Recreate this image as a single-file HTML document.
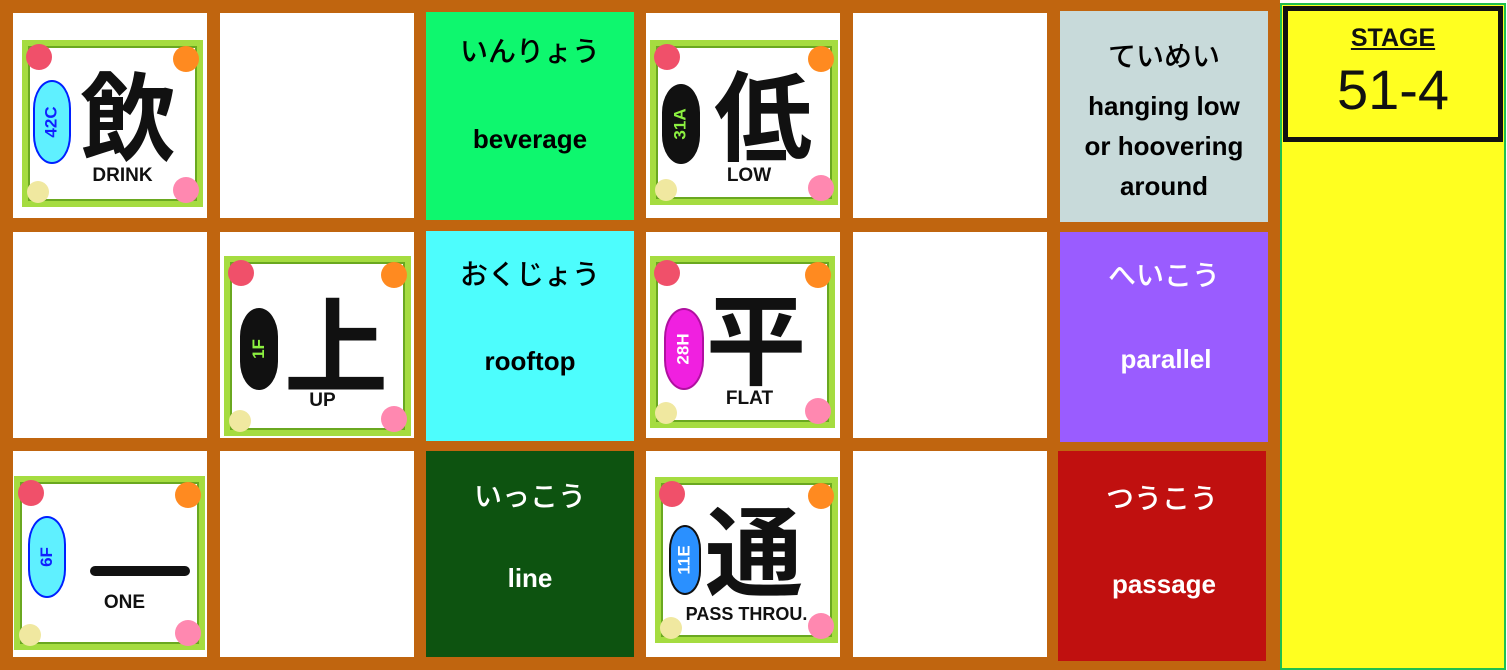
<!DOCTYPE html>
<html><head><meta charset="utf-8"><style>
*{margin:0;padding:0;box-sizing:border-box}
body{width:1507px;height:670px;background:#fff;position:relative;overflow:hidden;font-family:"Liberation Sans","Noto Sans CJK JP",sans-serif}
#bg{position:absolute;left:0;top:0;width:1280px;height:670px;background:#c0650f}
.c{position:absolute;background:#fff}
.jp{position:absolute;left:0;right:0;text-align:center;font-size:28px;font-family:"Noto Sans CJK JP",sans-serif;font-weight:500}
.en{position:absolute;left:0;right:0;text-align:center;font-size:26px;font-weight:bold}
.card{position:absolute;border:8px solid #a5dc40;outline:2px solid #6aa820;outline-offset:-8px;background:#fff}
.card .f{position:absolute;width:26px;height:26px;border-radius:50%}
.card .k{position:absolute;font-family:"Noto Sans CJK JP",sans-serif;font-weight:700;color:#111;line-height:1}
.card .cap{position:absolute;left:0;right:0;text-align:center;font-weight:bold;font-size:19px;color:#111}
.cloud{position:absolute;border-radius:20px/30px;border:2px solid #0020ff;display:flex;align-items:center;justify-content:center}
.cloud span{transform:rotate(-90deg);font-weight:bold;font-size:17px;white-space:nowrap}
</style></head><body>
<div id="bg"></div>
<!-- row 1 -->
<div class="c" style="left:13px;top:13px;width:194px;height:205px"></div>
<div class="c" style="left:220px;top:13px;width:194px;height:205px"></div>
<div class="c" style="left:426px;top:12px;width:208px;height:208px;background:#0ef76e">
 <div class="jp" style="top:18px">いんりょう</div><div class="en" style="top:112px">beverage</div></div>
<div class="c" style="left:646px;top:13px;width:194px;height:205px"></div>
<div class="c" style="left:853px;top:13px;width:194px;height:205px"></div>
<div class="c" style="left:1060px;top:11px;width:208px;height:211px;background:#c8dada">
 <div class="jp" style="top:24px">ていめい</div>
 <div class="en" style="top:75px;line-height:40px;font-size:26px">hanging low<br>or hoovering<br>around</div></div>
<!-- row 2 -->
<div class="c" style="left:13px;top:232px;width:194px;height:206px"></div>
<div class="c" style="left:220px;top:232px;width:194px;height:206px"></div>
<div class="c" style="left:426px;top:231px;width:208px;height:210px;background:#4dfdfd">
 <div class="jp" style="top:22px">おくじょう</div><div class="en" style="top:115px">rooftop</div></div>
<div class="c" style="left:646px;top:232px;width:194px;height:206px"></div>
<div class="c" style="left:853px;top:232px;width:194px;height:206px"></div>
<div class="c" style="left:1060px;top:232px;width:208px;height:210px;background:#9a5cff;color:#fff">
 <div class="jp" style="top:22px">へいこう</div><div class="en" style="top:112px;left:4px">parallel</div></div>
<!-- row 3 -->
<div class="c" style="left:13px;top:451px;width:194px;height:206px"></div>
<div class="c" style="left:220px;top:451px;width:194px;height:206px"></div>
<div class="c" style="left:426px;top:451px;width:208px;height:206px;background:#0d5310;color:#fff">
 <div class="jp" style="top:24px">いっこう</div><div class="en" style="top:112px">line</div></div>
<div class="c" style="left:646px;top:451px;width:194px;height:206px"></div>
<div class="c" style="left:853px;top:451px;width:194px;height:206px"></div>
<div class="c" style="left:1058px;top:451px;width:208px;height:210px;background:#c0100f;color:#fff">
 <div class="jp" style="top:26px">つうこう</div><div class="en" style="top:118px;left:4px">passage</div></div>

<!-- cards -->
<div class="card" style="left:22px;top:40px;width:181px;height:167px">
 <div class="f" style="left:-4px;top:-4px;background:#f0506a"></div><div class="f" style="right:-4px;top:-2px;background:#ff8a20"></div>
 <div class="f" style="left:-3px;bottom:-4px;background:#f0e8a0;width:22px;height:22px"></div><div class="f" style="right:-4px;bottom:-4px;background:#ff88b0"></div>
 <div class="cloud" style="left:3px;top:32px;width:38px;height:84px;background:#5ff0ff;color:#1020ff"><span>42C</span></div>
 <div class="k" style="left:50px;top:16px;font-size:96px">飲</div>
 <div class="cap" style="top:117px;left:20px">DRINK</div></div>

<div class="card" style="left:650px;top:40px;width:188px;height:165px">
 <div class="f" style="left:-4px;top:-4px;background:#f0506a"></div><div class="f" style="right:-4px;top:-2px;background:#ff8a20"></div>
 <div class="f" style="left:-3px;bottom:-4px;background:#f0e8a0;width:22px;height:22px"></div><div class="f" style="right:-4px;bottom:-4px;background:#ff88b0"></div>
 <div class="cloud" style="left:4px;top:36px;width:38px;height:80px;background:#111;border-color:#111;color:#8cf040"><span>31A</span></div>
 <div class="k" style="left:56px;top:14px;font-size:98px">低</div>
 <div class="cap" style="top:117px;left:10px">LOW</div></div>

<div class="card" style="left:224px;top:256px;width:187px;height:180px">
 <div class="f" style="left:-4px;top:-4px;background:#f0506a"></div><div class="f" style="right:-4px;top:-2px;background:#ff8a20"></div>
 <div class="f" style="left:-3px;bottom:-4px;background:#f0e8a0;width:22px;height:22px"></div><div class="f" style="right:-4px;bottom:-4px;background:#ff88b0"></div>
 <div class="cloud" style="left:8px;top:44px;width:38px;height:82px;background:#111;border-color:#111;color:#8cf040"><span>1F</span></div>
 <div class="k" style="left:52px;top:24px;font-size:104px">上</div>
 <div class="cap" style="top:126px;left:10px">UP</div></div>

<div class="card" style="left:650px;top:256px;width:185px;height:172px">
 <div class="f" style="left:-4px;top:-4px;background:#f0506a"></div><div class="f" style="right:-4px;top:-2px;background:#ff8a20"></div>
 <div class="f" style="left:-3px;bottom:-4px;background:#f0e8a0;width:22px;height:22px"></div><div class="f" style="right:-4px;bottom:-4px;background:#ff88b0"></div>
 <div class="cloud" style="left:6px;top:44px;width:40px;height:82px;background:#f020e0;border-color:#b010a0;color:#fff"><span>28H</span></div>
 <div class="k" style="left:48px;top:20px;font-size:100px">平</div>
 <div class="cap" style="top:124px;left:14px">FLAT</div></div>

<div class="card" style="left:14px;top:476px;width:191px;height:174px">
 <div class="f" style="left:-4px;top:-4px;background:#f0506a"></div><div class="f" style="right:-4px;top:-2px;background:#ff8a20"></div>
 <div class="f" style="left:-3px;bottom:-4px;background:#f0e8a0;width:22px;height:22px"></div><div class="f" style="right:-4px;bottom:-4px;background:#ff88b0"></div>
 <div class="cloud" style="left:6px;top:32px;width:38px;height:82px;background:#5ff0ff;color:#1020ff"><span>6F</span></div>
 <div style="position:absolute;left:68px;top:82px;width:100px;height:10px;background:#111;border-radius:5px"></div>
 <div class="cap" style="top:108px;left:30px">ONE</div></div>

<div class="card" style="left:655px;top:477px;width:183px;height:166px">
 <div class="f" style="left:-4px;top:-4px;background:#f0506a"></div><div class="f" style="right:-4px;top:-2px;background:#ff8a20"></div>
 <div class="f" style="left:-3px;bottom:-4px;background:#f0e8a0;width:22px;height:22px"></div><div class="f" style="right:-4px;bottom:-4px;background:#ff88b0"></div>
 <div class="cloud" style="left:6px;top:40px;width:32px;height:70px;background:#2a90ff;border-color:#111;color:#fff"><span>11E</span></div>
 <div class="k" style="left:42px;top:12px;font-size:98px">通</div>
 <div class="cap" style="top:119px;left:0px;font-size:18px">PASS THROU.</div></div>

<!-- stage panel -->
<div style="position:absolute;left:1280px;top:3px;width:226px;height:667px;background:#ffff20;border:2px solid #1fbf4f"></div>
<div style="position:absolute;left:1283px;top:6px;width:220px;height:136px;background:#ffff20;border:5px solid #111">
 <div style="position:absolute;left:0;right:0;top:13px;text-align:center;font-weight:bold;font-size:25px;text-decoration:underline;color:#111">STAGE</div>
 <div style="position:absolute;left:0;right:0;top:46px;text-align:center;font-size:56px;color:#111">51-4</div></div>
</body></html>
